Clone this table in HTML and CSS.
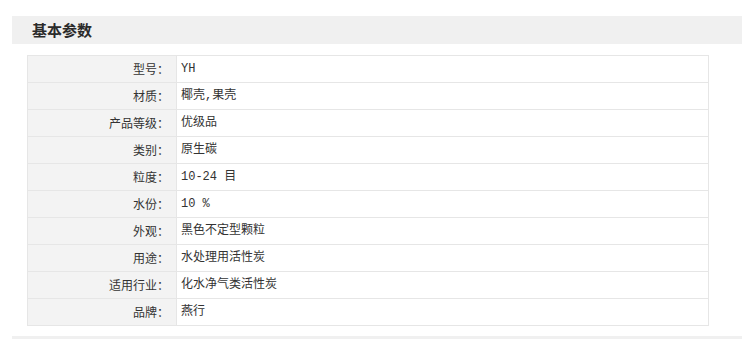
FILE: index.html
```html
<!DOCTYPE html>
<html lang="zh-CN">
<head>
<meta charset="utf-8">
<title>基本参数</title>
<link rel="stylesheet" href="styles.css">
</head>
<body>
<div class="page">
  <div class="section-title">基本参数</div>
  <table class="params">
    <tr><th>型号：</th><td>YH</td></tr>
    <tr><th>材质：</th><td>椰壳,果壳</td></tr>
    <tr><th>产品等级：</th><td>优级品</td></tr>
    <tr><th>类别：</th><td>原生碳</td></tr>
    <tr><th>粒度：</th><td>10-24 目</td></tr>
    <tr><th>水份：</th><td>10 %</td></tr>
    <tr><th>外观：</th><td>黑色不定型颗粒</td></tr>
    <tr><th>用途：</th><td>水处理用活性炭</td></tr>
    <tr><th>适用行业：</th><td>化水净气类活性炭</td></tr>
    <tr><th>品牌：</th><td>燕行</td></tr>
  </table>
  <div class="bottom-bar"></div>
</div>
</body>
</html>
```

FILE: styles.css
```css
html, body {
  margin: 0;
  padding: 0;
  background: #fff;
}
body {
  font-family: "Liberation Mono", "Noto Sans CJK SC", monospace;
  font-size: 12px;
  color: #333;
}
.page {
  padding: 16px 0 0 12px;
}
.section-title {
  height: 28px;
  line-height: 28px;
  background: #f0f0f0;
  padding-left: 20px;
  font-family: "Noto Sans CJK SC", sans-serif;
  font-size: 15px;
  font-weight: bold;
  color: #2b2b2b;
}
.params {
  margin: 11px 0 0 15px;
  width: 682px;
  border-collapse: collapse;
  border: 1px solid #e0e0e0;
}
.params th,
.params td {
  height: 26px;
  padding: 0;
  border: 1px solid #e6e6e6;
  font-weight: normal;
  vertical-align: middle;
  line-height: 26px;
}
.params th {
  width: 141px;
  text-align: right;
  padding-right: 7px;
  background: #f3f3f3;
  font-family: "Noto Sans CJK SC", sans-serif;
}
.params td {
  padding-left: 4px;
  background: #fff;
}
.bottom-bar {
  margin-top: 10px;
  height: 4px;
  background: #f0f0f0;
}
```
